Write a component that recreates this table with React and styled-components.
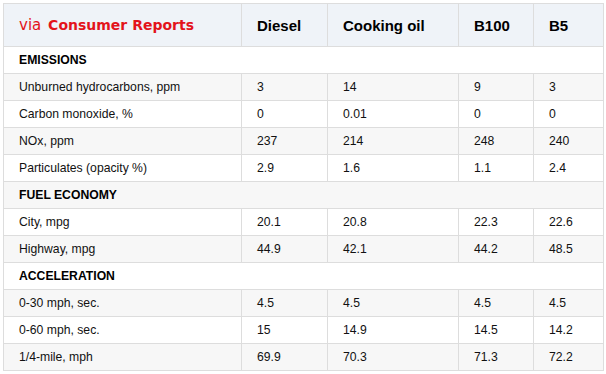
import React from "react";
import styled, { createGlobalStyle } from "styled-components";

const Global = createGlobalStyle`
  html, body { margin: 0; padding: 0; background: #fff; }
  body { font-family: "Liberation Sans", Arial, Helvetica, sans-serif; color: #111; }
`;

const Wrap = styled.div`
  padding: 3px;
`;

const Table = styled.table`
  border-collapse: collapse;
  width: 600px;
  table-layout: fixed;
  border: 1px solid #dddddd;
  font-size: 12.2px;
`;

const Col = styled.col`
  width: ${(p) => p.$w}px;
`;

const HeadCell = styled.th`
  background: #eff3f8;
  border: 1px solid #dddddd;
  height: 42px;
  padding: 0 15px;
  text-align: left;
  font-size: 15px;
  font-weight: bold;
  color: #000;
  vertical-align: middle;
`;

const Brand = styled.span`
  color: #e3131b;
  font-family: "DejaVu Sans", Verdana, sans-serif;
  font-size: 14px;
  font-weight: bold;
`;

const Via = styled.span`
  font-weight: normal;
  font-size: 15px;
  margin-right: 2px;
`;

const Row = styled.tr`
  background: ${(p) => (p.$stripe ? "#f7f7f7" : "#ffffff")};
`;

const Cell = styled.td`
  border: 1px solid #dddddd;
  height: 26px;
  padding: 0 15px;
  vertical-align: middle;
  color: #111;
`;

const SectionCell = styled.td`
  border: 1px solid #dddddd;
  height: 26px;
  padding: 0 15px;
  font-weight: bold;
  text-transform: uppercase;
  color: #000;
`;

const sections = [
  {
    title: "Emissions",
    rows: [
      ["Unburned hydrocarbons, ppm", "3", "14", "9", "3"],
      ["Carbon monoxide, %", "0", "0.01", "0", "0"],
      ["NOx, ppm", "237", "214", "248", "240"],
      ["Particulates (opacity %)", "2.9", "1.6", "1.1", "2.4"],
    ],
  },
  {
    title: "Fuel economy",
    rows: [
      ["City, mpg", "20.1", "20.8", "22.3", "22.6"],
      ["Highway, mpg", "44.9", "42.1", "44.2", "48.5"],
    ],
  },
  {
    title: "Acceleration",
    rows: [
      ["0-30 mph, sec.", "4.5", "4.5", "4.5", "4.5"],
      ["0-60 mph, sec.", "15", "14.9", "14.5", "14.2"],
      ["1/4-mile, mph", "69.9", "70.3", "71.3", "72.2"],
    ],
  },
];

export default function App() {
  const body = [];
  let i = 0;
  sections.forEach((s) => {
    body.push(
      <Row key={s.title} $stripe={i % 2 === 1}>
        <SectionCell colSpan={5}>{s.title}</SectionCell>
      </Row>
    );
    i++;
    s.rows.forEach((r) => {
      body.push(
        <Row key={r[0]} $stripe={i % 2 === 1}>
          {r.map((c, j) => (
            <Cell key={j}>{c}</Cell>
          ))}
        </Row>
      );
      i++;
    });
  });
  return (
    <Wrap>
      <Global />
      <Table>
        <colgroup>
          <Col $w={238} />
          <Col $w={86} />
          <Col $w={131} />
          <Col $w={75} />
          <Col $w={70} />
        </colgroup>
        <thead>
          <tr>
            <HeadCell>
              <Brand>
                <Via>via</Via> Consumer Reports
              </Brand>
            </HeadCell>
            <HeadCell>Diesel</HeadCell>
            <HeadCell>Cooking oil</HeadCell>
            <HeadCell>B100</HeadCell>
            <HeadCell>B5</HeadCell>
          </tr>
        </thead>
        <tbody>{body}</tbody>
      </Table>
    </Wrap>
  );
}
